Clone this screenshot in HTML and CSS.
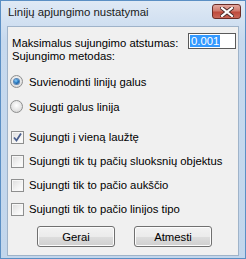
FILE: index.html
```html
<!DOCTYPE html>
<html lang="lt">
<head>
  <meta charset="UTF-8">
  <link rel="stylesheet" href="styles.css">
  <title>Linijų apjungimo nustatymai</title>
</head>
<body>
  <div class="window">
    <div class="titlebar">
      <span class="title">Linijų apjungimo nustatymai</span>
      <span class="close">
        <svg width="14" height="10" viewBox="0 0 14 10">
          <path d="M2 1 L12 9 M12 1 L2 9" stroke="#4a2a28" stroke-width="4" stroke-linecap="square"/>
          <path d="M2 1 L12 9 M12 1 L2 9" stroke="#ffffff" stroke-width="2.2" stroke-linecap="square"/>
        </svg>
      </span>
    </div>
    <div class="client">
      <div class="row-distance">
        <span class="label">Maksimalus sujungimo atstumas:</span>
        <span class="textbox"><span class="selected">0.001</span></span>
      </div>
      <div class="label method">Sujungimo metodas:</div>

      <div class="options radios">
        <div class="option"><span class="radio checked"></span>Suvienodinti linijų galus</div>
        <div class="option"><span class="radio"></span>Sujugti galus linija</div>
      </div>

      <div class="options checks">
        <div class="option">
          <span class="check">
            <svg width="11" height="11" viewBox="0 0 11 11">
              <path d="M2 5.5 L4.5 8.5 L9 1.5" fill="none" stroke="#4a5f8e" stroke-width="1.8"/>
            </svg>
          </span>Sujungti į vieną laužtę
        </div>
        <div class="option"><span class="check"></span>Sujungti tik tų pačių sluoksnių objektus</div>
        <div class="option"><span class="check"></span>Sujungti tik to pačio aukščio</div>
        <div class="option"><span class="check"></span>Sujungti tik to pačio linijos tipo</div>
      </div>

      <div class="buttons">
        <span class="button">Gerai</span>
        <span class="button">Atmesti</span>
      </div>
    </div>
  </div>
</body>
</html>
```

FILE: styles.css
```css
html, body {
  margin: 0;
  padding: 0;
  background: #ffffff;
}

body {
  font-family: "Liberation Sans", Arial, sans-serif;
  font-size: 11.3px;
  color: #000000;
}

.window {
  width: 246px;
  height: 259px;
  box-sizing: border-box;
  border: 1px solid #5b8fc4;
  background: linear-gradient(#dfe9f5, #c6d9ee 40px, #c2d6ec);
  padding: 0 6px 2px 6px;
  display: flex;
  flex-direction: column;
}

.titlebar {
  height: 25px;
  display: flex;
  align-items: center;
  justify-content: space-between;
}

.title {
  margin-left: 1px;
  margin-top: -4px;
  font-size: 11.4px;
  color: #1a1a1a;
  white-space: nowrap;
}

.close {
  width: 29px;
  height: 15px;
  margin-top: -4px;
  margin-right: -2px;
  box-sizing: border-box;
  border: 1px solid #6b2d27;
  border-radius: 3px;
  background: linear-gradient(#e3a99f, #d07a6d 45%, #bf4a3c 55%, #c9685a);
  display: flex;
  align-items: center;
  justify-content: center;
}

.client {
  flex: 1;
  background: #f0f0f0;
  border: 1px solid #9fb3c9;
  display: flex;
  flex-direction: column;
  padding: 0 2px 0 3px;
}

.label {
  white-space: nowrap;
}

.row-distance {
  margin-top: 6px;
  height: 16px;
  display: flex;
  justify-content: space-between;
  align-items: center;
}

.row-distance .label {
  padding-top: 3px;
  padding-left: 1px;
}

.textbox {
  flex-shrink: 0;
  width: 48px;
  height: 16px;
  box-sizing: border-box;
  border: 1px solid #5a5a5a;
  background: #ffffff;
  padding: 1px 0 0 1px;
  line-height: 13px;
}

.selected {
  background: #3399ff;
  color: #ffffff;
  padding: 0 1px;
}

.method {
  height: 15px;
  line-height: 15px;
  padding-left: 1px;
}

.radios {
  margin-top: 5px;
}

.radios .option {
  height: 25px;
}

.checks {
  margin-top: 6px;
}

.checks .option {
  height: 24px;
}

.option {
  display: flex;
  align-items: center;
  white-space: nowrap;
}

.radio {
  width: 11px;
  height: 11px;
  margin: 0 6px 0 -1px;
  border: 1px solid #8e8f8f;
  border-radius: 50%;
  background: radial-gradient(circle at 50% 40%, #ffffff, #dedede 70%, #c8c8c8);
  display: flex;
  align-items: center;
  justify-content: center;
}

.radio.checked::after {
  content: "";
  width: 5px;
  height: 5px;
  border-radius: 50%;
  background: radial-gradient(circle at 40% 35%, #8ad0ff, #1c6fb8 55%, #0b3e7a);
  box-shadow: 0 0 0 1px #5a86b6;
}

.check {
  width: 11px;
  height: 11px;
  margin: 0 5px 0 0;
  border: 1px solid #8e8f8f;
  background: linear-gradient(135deg, #dcdcdc, #f4f4f4 60%, #ffffff);
  box-shadow: inset 0 0 0 1px #f7f7f7;
  display: flex;
  align-items: center;
  justify-content: center;
}

.buttons {
  margin-top: 5px;
  display: flex;
  padding-left: 26px;
  gap: 19px;
}

.button {
  width: 78px;
  height: 21px;
  box-sizing: border-box;
  border: 1px solid #707070;
  border-radius: 3px;
  background: linear-gradient(#f2f2f2, #ebebeb 50%, #dddddd 51%, #cfcfcf);
  box-shadow: inset 0 0 0 1px #fcfcfc;
  display: flex;
  align-items: center;
  justify-content: center;
}
```
